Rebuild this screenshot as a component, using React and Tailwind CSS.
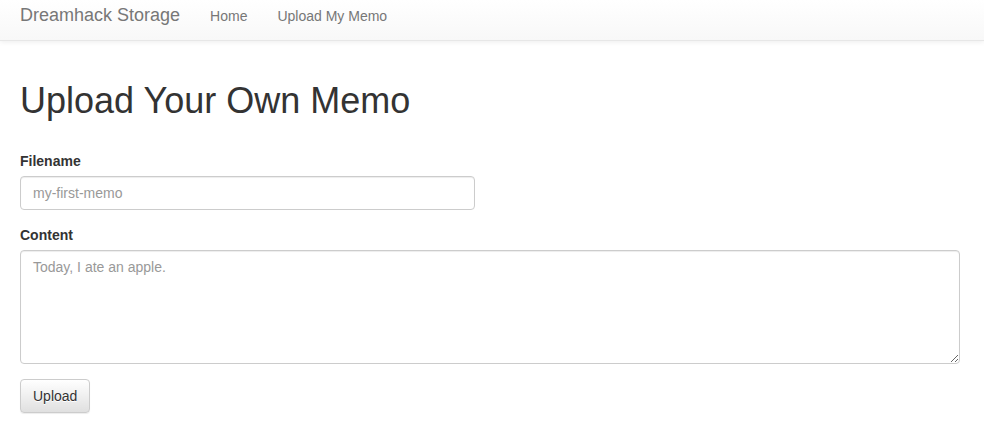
import React from "react";

const App = () => {
  return (
    <div className="min-h-screen bg-white text-[#333] font-['Liberation_Sans',Arial,sans-serif] text-[14px]">
      {/* Navbar */}
      <nav className="h-[41px] border-b border-[#e7e7e7] bg-gradient-to-b from-white to-[#f8f8f8] shadow-[0_1px_5px_rgba(0,0,0,0.075)]">
        <div className="flex items-baseline pt-[5px] pl-[20px]">
          <a href="#" className="text-[18px] leading-[20px] text-[#777] pr-[15px]">
            Dreamhack Storage
          </a>
          <a href="#" className="text-[14px] leading-[20px] text-[#777] px-[15px]">
            Home
          </a>
          <a href="#" className="text-[14px] leading-[20px] text-[#777] px-[15px]">
            Upload My Memo
          </a>
        </div>
      </nav>

      {/* Main */}
      <main className="pl-[20px] pr-[24px] pt-[40px]">
        <h1 className="text-[36px] leading-[1.1] font-normal text-[#333]">
          Upload Your Own Memo
        </h1>

        <form className="mt-[30px]" onSubmit={(e) => e.preventDefault()}>
          <div className="mb-[15px]">
            <label className="block font-bold leading-[20px] mb-[5px]">Filename</label>
            <input
              type="text"
              placeholder="my-first-memo"
              className="block w-[455px] h-[34px] px-[12px] py-[6px] text-[14px] leading-[20px] text-[#555] border border-[#ccc] rounded-[4px] shadow-[inset_0_1px_1px_rgba(0,0,0,0.075)] placeholder:text-[#999] outline-none"
            />
          </div>

          <div className="mb-[15px]">
            <label className="block font-bold leading-[20px] mb-[5px]">Content</label>
            <textarea
              rows={5}
              placeholder="Today, I ate an apple."
              className="block w-full h-[114px] px-[12px] py-[6px] text-[14px] leading-[20px] text-[#555] border border-[#ccc] rounded-[4px] shadow-[inset_0_1px_1px_rgba(0,0,0,0.075)] placeholder:text-[#999] outline-none"
            />
          </div>

          <button
            type="submit"
            className="h-[34px] px-[12px] py-[6px] text-[14px] leading-[20px] text-[#333] border border-[#ccc] rounded-[4px] bg-gradient-to-b from-white to-[#e0e0e0] shadow-[inset_0_1px_0_rgba(255,255,255,0.15),0_1px_1px_rgba(0,0,0,0.075)] [text-shadow:0_1px_0_#fff]"
          >
            Upload
          </button>
        </form>
      </main>
    </div>
  );
};

export default App;
